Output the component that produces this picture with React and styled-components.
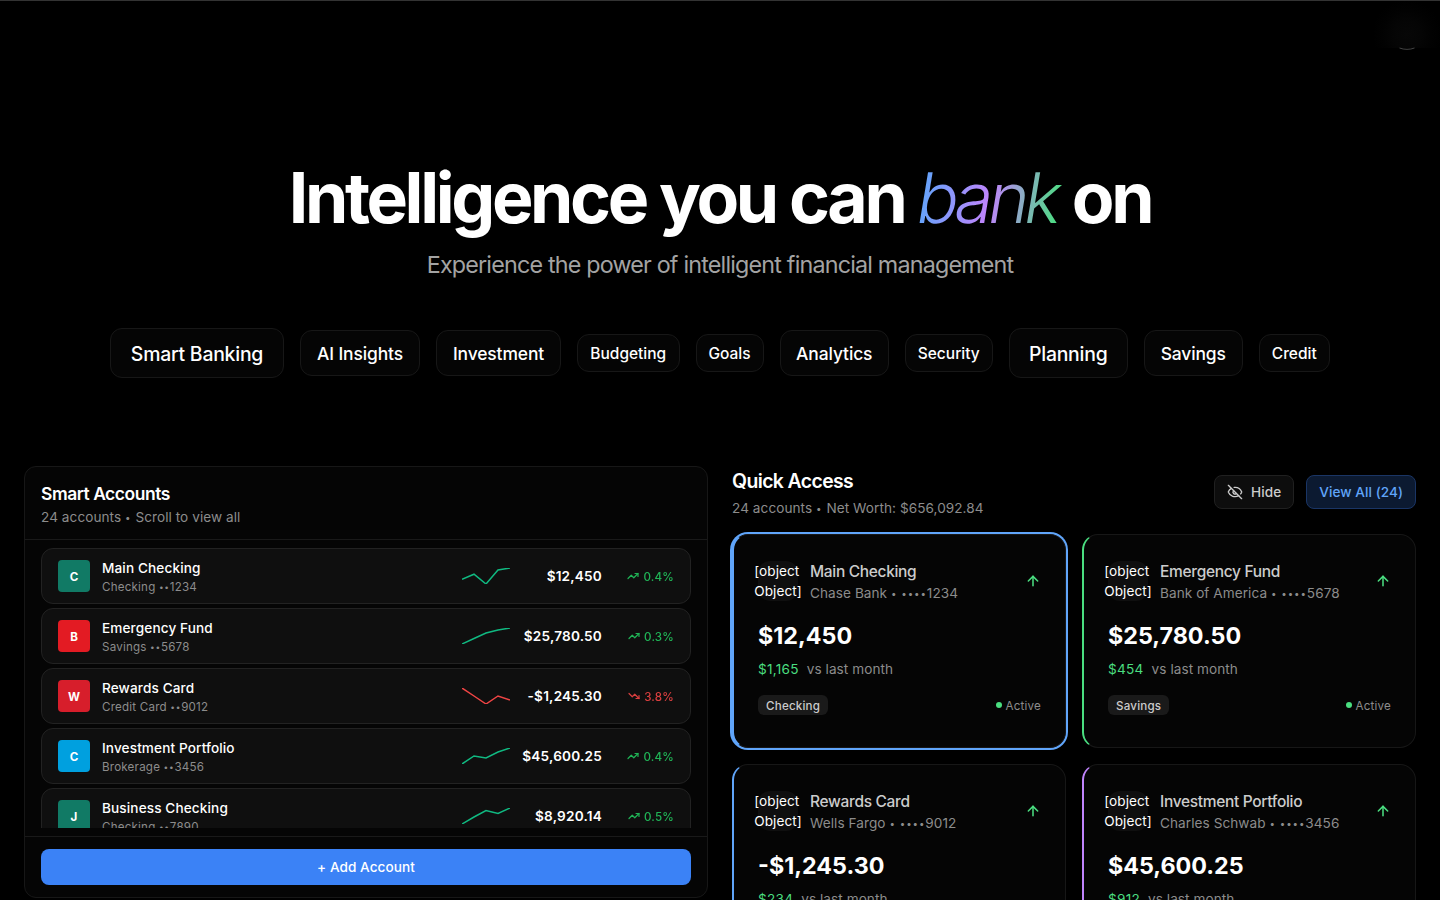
import React from 'react';
import styled, { createGlobalStyle } from 'styled-components';
import { ArrowUp, EyeOff, TrendingDown, TrendingUp } from 'lucide-react';

const GlobalStyle = createGlobalStyle`
  *, *::before, *::after { box-sizing: border-box; }
  html, body { margin: 0; padding: 0; background: #000; }
  body {
    height: 900px;
    overflow: hidden;
    color: #fff;
    font-family: Inter, "Liberation Sans", sans-serif;
    font-size: 13.6px;
    line-height: 20px;
    letter-spacing: 0.06px;
    -webkit-font-smoothing: antialiased;
  }
  h1, h2, p { margin: 0; }
  button { font: inherit; color: inherit; letter-spacing: inherit; }
`;

const Page = styled.div`
  height: 900px;
  overflow: hidden;
  background: #000;
`;

const TopBar = styled.header`
  height: 50px;
  border-top: 1px solid #333;
  display: flex;
  justify-content: flex-end;
`;

const Glow = styled.div`
  width: 66px;
  height: 47px;
  background: radial-gradient(circle 35px at 50% 72%, #070707 0%, #050505 40%, #020202 70%, #000 100%);
  display: flex;
  justify-content: center;
`;

const AvatarEdge = styled.svg`
  display: block;
  flex: none;
  margin-top: 46px;
`;

const Hero = styled.section`
  height: 416px;
  padding-top: 112px;
  display: flex;
  flex-direction: column;
  align-items: center;
`;

const Title = styled.h1`
  font-size: 69.7px;
  line-height: 72px;
  font-weight: 700;
  letter-spacing: -3.35px;
  white-space: nowrap;
`;

const Accent = styled.span`
  display: inline-block;
  transform: skewX(-9.5deg);
  font-weight: 300;
  letter-spacing: -4.8px;
  padding-right: 4px;
  margin-right: -2.5px;
  background: linear-gradient(to right, #60a5fa, #c084fc, #4ade80);
  -webkit-background-clip: text;
  background-clip: text;
  color: transparent;
`;

const Subtitle = styled.p`
  margin-top: 15px;
  font-size: 23.3px;
  line-height: 32px;
  letter-spacing: -0.81px;
  color: #a3a3a3;
  white-space: nowrap;
`;

const Pills = styled.div`
  margin-top: 47px;
  height: 50px;
  display: flex;
  align-items: center;
  gap: 16px;
`;

const pillSizes = {
  lg: { height: 50, font: 19.4, spacing: -0.22, drop: 2 },
  md: { height: 46, font: 17.45, spacing: -0.12, drop: 1 },
  sm: { height: 38, font: 15.5, spacing: 0, drop: 1 },
};

const Pill = styled.div`
  width: ${(p) => p.$width}px;
  height: ${(p) => pillSizes[p.$size].height}px;
  padding-top: ${(p) => pillSizes[p.$size].drop}px;
  display: flex;
  align-items: center;
  justify-content: center;
  border: 1px solid #171717;
  border-radius: 12px;
  background: #050505;
  font-weight: 500;
  white-space: nowrap;
  font-size: ${(p) => pillSizes[p.$size].font}px;
  letter-spacing: ${(p) => pillSizes[p.$size].spacing}px;
`;

const Columns = styled.main`
  display: grid;
  grid-template-columns: 684px 684px;
  gap: 24px;
  padding: 0 24px;
  align-items: start;
`;

const Panel = styled.section`
  border: 1px solid #171717;
  border-radius: 12px;
  background: #050505;
`;

const PanelHeader = styled.div`
  padding: 12px 16px;
  border-bottom: 1px solid #191919;
`;

const PanelTitle = styled.h2`
  font-size: 17.45px;
  line-height: 29px;
  margin-bottom: -1px;
  font-weight: 600;
  letter-spacing: -0.45px;
`;

const Muted = styled.p`
  color: #8c8c8c;
  white-space: nowrap;
`;

const Bullet = styled.span`
  font-size: 0.72em;
  letter-spacing: 0.09em;
  line-height: 0;
  vertical-align: 0.1em;
`;

const ListArea = styled.div`
  padding: 8px 16px;
`;

const List = styled.div`
  height: 280px;
  overflow: hidden;
  display: flex;
  flex-direction: column;
  gap: 4px;
`;

const Row = styled.div`
  flex: none;
  height: 56px;
  border: 1px solid #222;
  border-radius: 12px;
  background: #0f0f0f;
  padding: 0 16px;
  display: flex;
  align-items: center;
`;

const Badge = styled.div`
  width: 32px;
  height: 32px;
  padding-top: 1px;
  border-radius: 4px;
  background: ${(p) => p.$color};
  display: flex;
  align-items: center;
  justify-content: center;
  font-size: 11.6px;
  font-weight: 700;
`;

const RowText = styled.div`
  flex: 1;
  margin-left: 12px;
`;

const RowName = styled.div`
  font-weight: 500;
  letter-spacing: 0.12px;
`;

const RowSub = styled.div`
  font-size: 11.6px;
  line-height: 18px;
  margin-bottom: -2px;
  letter-spacing: 0.2px;
  color: #8c8c8c;
`;

const Spark = styled.svg`
  display: block;
  width: 48px;
  height: 16px;
  overflow: hidden;
`;

const RowAmount = styled.div`
  width: 92px;
  text-align: right;
  font-weight: 600;
  letter-spacing: 0.2px;
  white-space: nowrap;
`;

const RowChange = styled.div`
  width: 72px;
  display: flex;
  align-items: center;
  justify-content: flex-end;
  gap: 4px;
  font-size: 11.6px;
  line-height: 16px;
  letter-spacing: 0.2px;
  font-weight: 500;
  color: ${(p) => (p.$down ? '#ef4444' : '#22c55e')};
  opacity: 0.9;
`;

const ChangeText = styled.span`
  padding-top: 1px;
`;

const PanelFooter = styled.div`
  border-top: 1px solid #191919;
  padding: 12px 16px;
`;

const AddButton = styled.button`
  display: block;
  width: 100%;
  height: 36px;
  padding: 0;
  border: 0;
  border-radius: 8px;
  background: #3b82f6;
  font-weight: 500;
`;

const QuickHeader = styled.div`
  height: 52px;
  display: flex;
  align-items: center;
  justify-content: space-between;
  margin-bottom: 16px;
`;

const QuickTitle = styled.h2`
  font-size: 19.4px;
  line-height: 30px;
  font-weight: 600;
  letter-spacing: -0.6px;
  margin-bottom: 2px;
`;

const Actions = styled.div`
  display: flex;
  gap: 12px;
`;

const ActionButton = styled.button`
  height: 34px;
  padding: 0 12px;
  border-radius: 8px;
  display: flex;
  align-items: center;
  gap: 8px;
  font-weight: ${(p) => (p.$primary ? 500 : 450)};
  border: 1px solid ${(p) => (p.$primary ? '#1a3565' : '#202020')};
  background: ${(p) => (p.$primary ? '#0c1a31' : '#0d0d0d')};
  color: ${(p) => (p.$primary ? '#60a5fa' : '#cccccc')};
`;

const Cards = styled.div`
  display: grid;
  grid-template-columns: 1fr 1fr;
  gap: 16px;
`;

const Card = styled.article`
  height: 214px;
  padding: 24px;
  border: 1px solid #171717;
  border-left: 2px solid ${(p) => p.$accent};
  border-radius: 16px;
  background: #050505;
  box-shadow: ${(p) => (p.$selected ? '0 0 0 2px #60a5fa' : 'none')};
`;

const CardTop = styled.div`
  display: flex;
  align-items: center;
  height: 44px;
`;

const CardIcon = styled.div`
  width: 40px;
  height: 40px;
  flex: none;
  border-radius: 12px;
  background: #0f0f0f;
  display: flex;
  align-items: center;
  justify-content: center;
`;

const CardInfo = styled.div`
  flex: 1;
  margin-left: 12px;
`;

const CardName = styled.div`
  font-size: 15.5px;
  line-height: 25px;
  margin-bottom: -1px;
  letter-spacing: -0.32px;
  font-weight: 450;
  color: #ccc;
  white-space: nowrap;
`;

const CardAmount = styled.div`
  margin-top: 16px;
  font-size: 23.3px;
  line-height: 34px;
  letter-spacing: 0;
  font-weight: 700;
`;

const CardChange = styled.div`
  margin-top: 6px;
  display: flex;
  gap: 8px;
  color: #8c8c8c;
`;

const Gain = styled.span`
  color: #4ade80;
  letter-spacing: 0.25px;
`;

const CardBottom = styled.div`
  margin-top: 16px;
  display: flex;
  align-items: center;
  justify-content: space-between;
  font-size: 11.6px;
  line-height: 16px;
  letter-spacing: 0.2px;
`;

const Tag = styled.span`
  padding: 3px 8px 1px;
  border-radius: 6px;
  background: #1a1a1a;
  color: #ccc;
  font-weight: 500;
`;

const Status = styled.span`
  display: flex;
  align-items: center;
  gap: 4px;
  color: #8c8c8c;
`;

const StatusText = styled.span`
  padding-top: 1px;
`;

const Dot = styled.span`
  width: 6px;
  height: 6px;
  border-radius: 50%;
  background: #4ade80;
`;

const pills = [
  ['Smart Banking', 'lg', 174],
  ['AI Insights', 'md', 120],
  ['Investment', 'md', 125],
  ['Budgeting', 'sm', 102.5],
  ['Goals', 'sm', 68],
  ['Analytics', 'md', 109.5],
  ['Security', 'sm', 87.5],
  ['Planning', 'lg', 119.5],
  ['Savings', 'md', 98.5],
  ['Credit', 'sm', 71.5],
];

const accounts = [
  { letter: 'C', color: '#117a65', name: 'Main Checking', sub: 'Checking ••1234', amount: '$12,450', change: '0.4%', points: '0,11.2 12,6.2 24,16 36,2 48,0' },
  { letter: 'B', color: '#e31b23', name: 'Emergency Fund', sub: 'Savings ••5678', amount: '$25,780.50', change: '0.3%', points: '0,16 12,10.5 24,5 36,2 48,0' },
  { letter: 'W', color: '#d71e2b', name: 'Rewards Card', sub: 'Credit Card ••9012', amount: '-$1,245.30', change: '3.8%', down: true, points: '0,0 12,8 24,16 36,8 48,12' },
  { letter: 'C', color: '#00a0df', name: 'Investment Portfolio', sub: 'Brokerage ••3456', amount: '$45,600.25', change: '0.4%', points: '0,16 12,8 24,10 36,4 48,0' },
  { letter: 'J', color: '#117a65', name: 'Business Checking', sub: 'Checking ••7890', amount: '$8,920.14', change: '0.5%', points: '0,16 12,9 24,2.5 36,5.5 48,0' },
];

const cards = [
  { accent: '#60a5fa', name: 'Main Checking', sub: 'Chase Bank • ••••1234', amount: '$12,450', gain: '$1,165', type: 'Checking', selected: true },
  { accent: '#4ade80', name: 'Emergency Fund', sub: 'Bank of America • ••••5678', amount: '$25,780.50', gain: '$454', type: 'Savings' },
  { accent: '#60a5fa', name: 'Rewards Card', sub: 'Wells Fargo • ••••9012', amount: '-$1,245.30', gain: '$234', type: 'Credit Card' },
  { accent: '#c084fc', name: 'Investment Portfolio', sub: 'Charles Schwab • ••••3456', amount: '$45,600.25', gain: '$912', type: 'Brokerage' },
];

function Bulleted({ text }) {
  return text
    .split(/(•+)/)
    .map((part, i) => (part.startsWith('•') ? <Bullet key={i}>{part}</Bullet> : part));
}

function AccountRow({ account }) {
  const Trend = account.down ? TrendingDown : TrendingUp;
  return (
    <Row>
      <Badge $color={account.color}>{account.letter}</Badge>
      <RowText>
        <RowName>{account.name}</RowName>
        <RowSub><Bulleted text={account.sub} /></RowSub>
      </RowText>
      <Spark viewBox="0 0 48 16">
        <polyline points={account.points} fill="none" stroke={account.down ? '#ef4444' : '#10b981'} strokeWidth="1.5" />
      </Spark>
      <RowAmount>{account.amount}</RowAmount>
      <RowChange $down={account.down}>
        <Trend size={12} strokeWidth={2.4} />
        <ChangeText>{account.change}</ChangeText>
      </RowChange>
    </Row>
  );
}

function AccountCard({ card }) {
  return (
    <Card $accent={card.accent} $selected={card.selected}>
      <CardTop>
        <CardIcon>[object Object]</CardIcon>
        <CardInfo>
          <CardName>{card.name}</CardName>
          <Muted><Bulleted text={card.sub} /></Muted>
        </CardInfo>
        <ArrowUp size={16} strokeWidth={2.3} color="#4ade80" />
      </CardTop>
      <CardAmount>{card.amount}</CardAmount>
      <CardChange>
        <Gain>{card.gain}</Gain>
        <span>vs last month</span>
      </CardChange>
      <CardBottom>
        <Tag>{card.type}</Tag>
        <Status>
          <Dot />
          <StatusText>Active</StatusText>
        </Status>
      </CardBottom>
    </Card>
  );
}

export default function App() {
  return (
    <Page>
      <GlobalStyle />
      <TopBar>
        <Glow>
          <AvatarEdge width="18" height="4" viewBox="0 0 18 4">
            <path d="M1.5 1C6 2.8 12 2.8 16.5 1" fill="none" stroke="#444" strokeWidth="1" />
          </AvatarEdge>
        </Glow>
      </TopBar>
      <Hero>
        <Title>
          Intelligence you can <Accent>bank</Accent> on
        </Title>
        <Subtitle>Experience the power of intelligent financial management</Subtitle>
        <Pills>
          {pills.map(([label, size, width]) => (
            <Pill key={label} $size={size} $width={width}>{label}</Pill>
          ))}
        </Pills>
      </Hero>
      <Columns>
        <Panel>
          <PanelHeader>
            <PanelTitle>Smart Accounts</PanelTitle>
            <Muted><Bulleted text="24 accounts • Scroll to view all" /></Muted>
          </PanelHeader>
          <ListArea>
            <List>
              {accounts.map((a) => (
                <AccountRow key={a.name} account={a} />
              ))}
            </List>
          </ListArea>
          <PanelFooter>
            <AddButton>+ Add Account</AddButton>
          </PanelFooter>
        </Panel>
        <section>
          <QuickHeader>
            <div>
              <QuickTitle>Quick Access</QuickTitle>
              <Muted><Bulleted text="24 accounts • Net Worth: $656,092.84" /></Muted>
            </div>
            <Actions>
              <ActionButton>
                <EyeOff size={16} />
                Hide
              </ActionButton>
              <ActionButton $primary>View All (24)</ActionButton>
            </Actions>
          </QuickHeader>
          <Cards>
            {cards.map((c) => (
              <AccountCard key={c.name} card={c} />
            ))}
          </Cards>
        </section>
      </Columns>
    </Page>
  );
}
